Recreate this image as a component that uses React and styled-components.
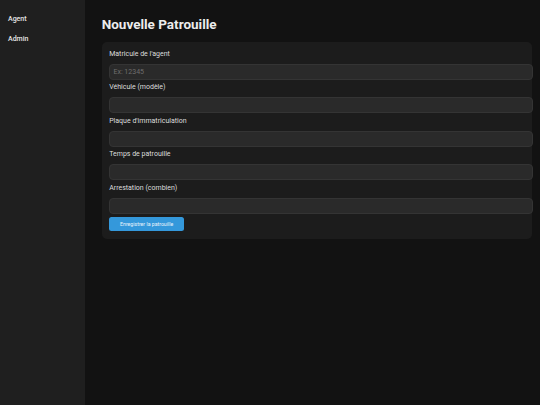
import React from 'react';
import styled, { createGlobalStyle } from 'styled-components';

const GlobalStyle = createGlobalStyle`
  html, body {
    margin: 0;
    padding: 0;
    background: #121212;
    font-family: Roboto, "Liberation Sans", Arial, sans-serif;
  }
`;

const Layout = styled.div`
  display: flex;
  width: 540px;
  height: 405px;
  overflow: hidden;
`;

const Sidebar = styled.nav`
  width: 85px;
  flex-shrink: 0;
  background: #1f1f1f;
  padding-top: 9px;
  box-sizing: border-box;
`;

const NavItem = styled.a`
  display: block;
  padding: 5.5px 8px;
  line-height: 9px;
  font-size: 7px;
  font-weight: 500;
  color: #e6e6e6;
  text-decoration: none;
`;

const Main = styled.main`
  flex: 1;
  background: #121212;
  padding: 16px 8.3px 0 16.7px;
`;

const Title = styled.h1`
  margin: 0 0 9px;
  font-size: 13.5px;
  line-height: 17px;
  font-weight: 700;
  color: #ececec;
`;

const Card = styled.form`
  background: #1c1c1c;
  border-radius: 5px;
  padding: 7.5px;
`;

const Field = styled.div`
  margin-bottom: 3.4px;
`;

const Label = styled.label`
  display: block;
  font-size: 7px;
  line-height: 9px;
  color: #dcdcdc;
  margin-bottom: 5px;
`;

const Input = styled.input`
  display: block;
  width: 100%;
  height: 6.2px;
  padding: 4px 3.3px;
  border: 1px solid #343434;
  border-radius: 4px;
  background: #2a2a2a;
  color: #ddd;
  font-family: inherit;
  font-size: 7px;
  outline: none;

  &::placeholder {
    color: #6e6e6e;
  }
`;

const SubmitButton = styled.button`
  display: block;
  margin-top: 2px;
  width: 75px;
  height: 14px;
  padding: 0;
  border: none;
  border-radius: 2.5px;
  background: #3498db;
  color: #eaf4fb;
  font-family: inherit;
  font-size: 5.2px;
  cursor: pointer;
`;

const fields = [
  { label: "Matricule de l'agent", placeholder: 'Ex: 12345' },
  { label: 'Véhicule (modèle)' },
  { label: "Plaque d'immatriculation" },
  { label: 'Temps de patrouille' },
  { label: 'Arrestation (combien)' },
];

export default function App() {
  return (
    <>
      <GlobalStyle />
      <Layout>
        <Sidebar>
          <NavItem href="#">Agent</NavItem>
          <NavItem href="#">Admin</NavItem>
        </Sidebar>
        <Main>
          <Title>Nouvelle Patrouille</Title>
          <Card onSubmit={(e) => e.preventDefault()}>
            {fields.map((f, i) => (
              <Field key={i}>
                <Label>{f.label}</Label>
                <Input type="text" placeholder={f.placeholder || ''} />
              </Field>
            ))}
            <SubmitButton type="submit">Enregistrer la patrouille</SubmitButton>
          </Card>
        </Main>
      </Layout>
    </>
  );
}
